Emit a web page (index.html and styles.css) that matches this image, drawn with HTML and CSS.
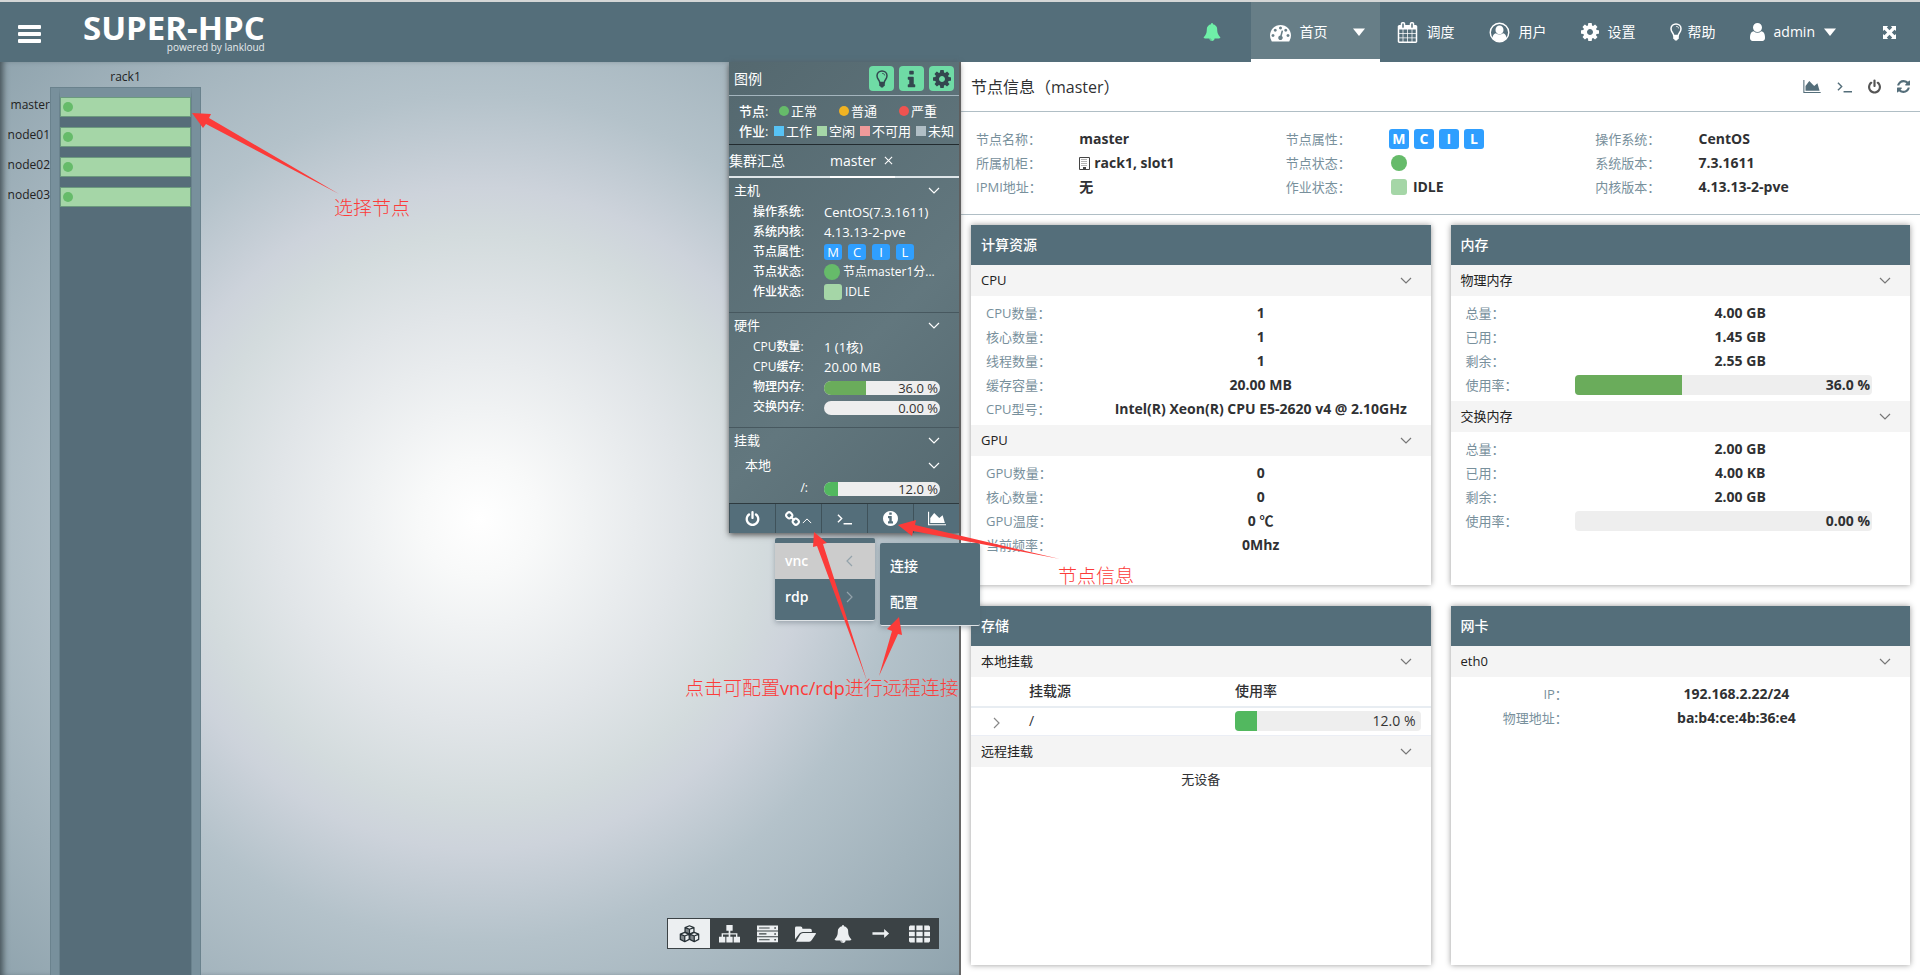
FILE: index.html
```html
<!DOCTYPE html>
<html lang="zh-CN">
<head>
<meta charset="utf-8">
<title>SUPER-HPC</title>
<link rel="stylesheet" href="styles.css">
</head>
<body>
<svg class="sprite" aria-hidden="true">
  <symbol id="i-bars" viewBox="0 0 23 18"><path d="M1 0h21a1 1 0 011 1v2a1 1 0 01-1 1H1a1 1 0 01-1-1V1a1 1 0 011-1zM1 7h21a1 1 0 011 1v2a1 1 0 01-1 1H1a1 1 0 01-1-1V8a1 1 0 011-1zM1 14h21a1 1 0 011 1v2a1 1 0 01-1 1H1a1 1 0 01-1-1v-2a1 1 0 011-1z"/></symbol>
  <symbol id="i-bell" viewBox="0 0 1792 1792"><path d="M912 1696q0-16-16-16-59 0-101.500-42.500t-42.500-101.500q0-16-16-16t-16 16q0 73 51.500 124.500t124.500 51.500q16 0 16-16zm816-288q0 52-38 90t-90 38h-448q0 106-75 181t-181 75-181-75-75-181h-448q-52 0-90-38t-38-90q50-42 91-88t85-119.500 74.500-158.500 50-206 19.500-260q0-152 117-282.500t307-158.500q-8-19-8-39 0-40 28-68t68-28 68 28 28 68q0 20-8 39 190 28 307 158.500t117 282.500q0 139 19.500 260t50 206 74.500 158.500 85 119.500 91 88z"/></symbol>
  <symbol id="i-tach" viewBox="0 0 1792 1792"><path d="M384 1152q0-53-37.500-90.500t-90.500-37.500-90.500 37.500-37.500 90.500 37.500 90.500 90.500 37.500 90.500-37.500 37.500-90.500zm192-448q0-53-37.500-90.500t-90.500-37.500-90.500 37.500-37.500 90.500 37.500 90.500 90.500 37.500 90.500-37.500 37.500-90.500zm428 481l101-382q6-26-7.500-48.500t-38.500-29.500-48 6.500-30 39.500l-101 382q-60 5-107 43.500t-63 98.500q-20 77 20 146t117 89 146-20 89-117q16-60-6-117t-72-91zm660-33q0-53-37.500-90.500t-90.500-37.500-90.500 37.500-37.500 90.500 37.500 90.500 90.500 37.500 90.500-37.500 37.500-90.500zm-640-640q0-53-37.500-90.500t-90.500-37.500-90.500 37.500-37.500 90.500 37.500 90.500 90.500 37.500 90.500-37.500 37.500-90.500zm448 192q0-53-37.500-90.500t-90.500-37.500-90.500 37.500-37.500 90.500 37.500 90.500 90.500 37.500 90.500-37.500 37.500-90.500zm320 448q0 261-141 483-19 29-54 29h-1402q-35 0-54-29-141-221-141-483 0-182 71-348t191-286 286-191 348-71 348 71 286 191 191 286 71 348z"/></symbol>
  <symbol id="i-cal" viewBox="0 0 1792 1792"><path d="M192 1664h288v-288h-288v288zm352 0h320v-288h-320v288zm-352-352h288v-320h-288v320zm352 0h320v-320h-320v320zm-352-384h288v-288h-288v288zm736 736h320v-288h-320v288zm-384-736h320v-288h-320v288zm768 736h288v-288h-288v288zm-384-352h320v-320h-320v320zm-352-864v-288q0-13-9.500-22.500t-22.500-9.500h-64q-13 0-22.500 9.500t-9.500 22.500v288q0 13 9.500 22.500t22.500 9.500h64q13 0 22.500-9.500t9.500-22.500zm736 864h288v-320h-288v320zm-384-384h320v-288h-320v288zm384 0h288v-288h-288v288zm32-480v-288q0-13-9.500-22.500t-22.500-9.500h-64q-13 0-22.500 9.500t-9.500 22.500v288q0 13 9.500 22.500t22.500 9.500h64q13 0 22.500-9.500t9.500-22.500zm384-64v1280q0 52-38 90t-90 38h-1408q-52 0-90-38t-38-90v-1280q0-52 38-90t90-38h128v-96q0-66 47-113t113-47h64q66 0 113 47t47 113v96h384v-96q0-66 47-113t113-47h64q66 0 113 47t47 113v96h128q52 0 90 38t38 90z"/></symbol>
  <symbol id="i-usercircle" viewBox="0 0 22 22"><circle cx="11" cy="11" r="9.700" fill="none" stroke="currentColor" stroke-width="1.500"/><ellipse cx="11" cy="8.300" rx="4.200" ry="4.600"/><path d="M3.600 17c.3-3.400 1.600-5 3.700-5.300 2.200 1.900 5.200 1.900 7.400 0 2.100.3 3.400 1.900 3.700 5.300-4 4.600-10.800 4.600-14.800 0z"/></symbol>
  <symbol id="i-cog" viewBox="128 128 1536 1536"><path d="M1152 896q0-106-75-181t-181-75-181 75-75 181 75 181 181 75 181-75 75-181zm512-109v222q0 12-8 23t-20 13l-185 28q-19 54-39 91 35 50 107 138 10 12 10 25t-9 23q-27 37-99 108t-94 71q-12 0-26-9l-138-108q-44 23-91 38-16 136-29 186-7 28-36 28h-222q-14 0-24.500-8.500t-11.500-21.500l-28-184q-49-16-90-37l-141 107q-10 9-25 9-14 0-25-11-126-114-165-168-7-10-7-23 0-12 8-23 15-21 51-66.500t54-70.500q-27-50-41-99l-183-27q-13-2-21-12.500t-8-23.500v-222q0-12 8-23t19-13l186-28q14-46 39-92-40-57-107-138-10-12-10-24 0-10 9-23 26-36 98.500-107.500t94.500-71.500q13 0 26 10l138 107q44-23 91-38 16-136 29-186 7-28 36-28h222q14 0 24.500 8.500t11.500 21.500l28 184q49 16 90 37l142-107q9-9 24-9 13 0 25 10 129 119 165 170 7 8 7 22 0 12-8 23-15 21-51 66.500t-54 70.500q26 50 41 98l183 28q13 2 21 12.500t8 23.500z"/></symbol>
  <symbol id="i-bulb" viewBox="0 0 12 18"><path d="M3.700 12.500C3.700 10 1 9.200 1 5.800 1 3 3.200.9 6 .9S11 3 11 5.800c0 3.400-2.700 4.200-2.700 6.700z" fill="none" stroke="currentColor" stroke-width="1.500"/><path d="M6.200 3.400c1.400 0 2.400.8 2.400 2" fill="none" stroke="currentColor" stroke-width=".9"/><path d="M3.200 12h5.600v3.800L7.600 16.600 7 17.600H5l-.6-1-1.200-.8z"/></symbol>
  <symbol id="i-user" viewBox="256 128 1280 1536"><path d="M1536 1399q0 109-62.500 187t-150.500 78h-854q-88 0-150.500-78t-62.500-187q0-85 8.500-160.500t31.500-152 58.500-131 94-89 134.500-34.500q131 128 313 128t313-128q76 0 134.500 34.500t94 89 58.500 131 31.500 152 8.500 160.500zm-256-887q0 159-112.500 271.500t-271.500 112.500-271.500-112.500-112.500-271.500 112.500-271.500 271.500-112.500 271.500 112.500 112.500 271.500z"/></symbol>
  <symbol id="i-caret" viewBox="0 0 12 8"><path d="M0 .5h12L6 8z"/></symbol>
  <symbol id="i-expand" viewBox="0 0 14 14"><path d="M0 0h5.500L4.100 1.500 7 4.500l2.900-3L8.500 0H14v5.500l-1.500-1.400-3 2.900 3 2.900L14 8.500V14H8.500l1.400-1.500L7 9.500l-2.900 3L5.500 14H0V8.500l1.500 1.400 3-2.900-3-2.900L0 5.500z"/></symbol>
  <symbol id="i-power" viewBox="128 0 1536 1664"><path d="M1664 896q0 156-61 298t-164 245-245 164-298 61-298-61-245-164-164-245-61-298q0-182 80.500-343t226.500-270q43-32 95.500-25t83.500 50q32 42 24.500 94.500t-49.500 84.500q-98 74-151.500 181t-53.500 228q0 104 40.500 198.500t109.500 163.500 163.500 109.500 198.500 40.500 198.500-40.500 163.500-109.500 109.500-163.500 40.500-198.500q0-121-53.500-228t-151.500-181q-42-32-49.500-84.500t24.500-94.500q31-43 84-50t95 25q146 109 226.500 270t80.500 343zm-640-768v640q0 52-38 90t-90 38-90-38-38-90v-640q0-52 38-90t90-38 90 38 38 90z"/></symbol>
  <symbol id="i-refresh" viewBox="128 128 1536 1536"><path d="M1639 1056q0 5-1 7-64 268-268 434.500t-478 166.500q-146 0-282.500-55t-243.500-157l-129 129q-19 19-45 19t-45-19-19-45v-448q0-26 19-45t45-19h448q26 0 45 19t19 45-19 45l-137 137q71 66 161 102t187 36q134 0 250-65t186-179q11-17 53-117 8-23 30-23h192q13 0 22.500 9.500t9.500 22.500zm25-800v448q0 26-19 45t-45 19h-448q-26 0-45-19t-19-45 19-45l138-138q-148-137-349-137-134 0-250 65t-186 179q-11 17-53 117-8 23-30 23h-199q-13 0-22.500-9.500t-9.500-22.500v-7q65-268 270-434.500t480-166.500q146 0 284 55.500t245 156.500l130-129q19-19 45-19t45 19 19 45z"/></symbol>
  <symbol id="i-area" viewBox="0 128 2048 1536"><path d="M2048 1536v128h-2048v-1536h128v1408h1920zm-384-1024l256 896h-1664v-576l448-576 576 576z"/></symbol>
  <symbol id="i-term" viewBox="0 0 16 12"><path d="M1 1.500l4 4-4 4M7 11h9" fill="none" stroke="currentColor" stroke-width="1.500"/></symbol>
  <symbol id="i-info" viewBox="512 128 768 1408"><path d="M1216 1344v128q0 26-19 45t-45 19h-512q-26 0-45-19t-19-45v-128q0-26 19-45t45-19h64v-384h-64q-26 0-45-19t-19-45v-128q0-26 19-45t45-19h384q26 0 45 19t19 45v576h64q26 0 45 19t19 45zm-128-1152v192q0 26-19 45t-45 19h-256q-26 0-45-19t-19-45v-192q0-26 19-45t45-19h256q26 0 45 19t19 45z"/></symbol>
  <symbol id="i-infoc" viewBox="128 128 1536 1536"><path d="M1152 1376v-160q0-14-9-23t-23-9h-96v-512q0-14-9-23t-23-9h-320q-14 0-23 9t-9 23v160q0 14 9 23t23 9h96v320h-96q-14 0-23 9t-9 23v160q0 14 9 23t23 9h448q14 0 23-9t9-23zm-128-896v-160q0-14-9-23t-23-9h-192q-14 0-23 9t-9 23v160q0 14 9 23t23 9h192q14 0 23-9t9-23zm640 416q0 209-103 385.500t-279.500 279.500-385.500 103-385.500-103-279.500-279.500-103-385.500 103-385.500 279.500-279.500 385.500-103 385.500 103 279.500 279.500 103 385.500z"/></symbol>
  <symbol id="i-link" viewBox="0 0 16 16"><g fill="none" stroke="currentColor" stroke-width="2.200"><rect x="1.400" y="1.600" width="6.200" height="6" rx="2.600" transform="rotate(45 4.500 4.600)"/><rect x="8.400" y="8.400" width="6.200" height="6" rx="2.600" transform="rotate(45 11.500 11.400)"/><path d="M5.800 5.900l4.400 4.200"/></g></symbol>
  <symbol id="i-down" viewBox="0 0 12 7"><path d="M1 1l5 5 5-5" fill="none" stroke="currentColor" stroke-width="1.200"/></symbol>
  <symbol id="i-up" viewBox="0 0 12 7"><path d="M1 6l5-5 5 5" fill="none" stroke="currentColor" stroke-width="1.200"/></symbol>
  <symbol id="i-left" viewBox="0 0 7 12"><path d="M6 1L1 6l5 5" fill="none" stroke="currentColor" stroke-width="1.200"/></symbol>
  <symbol id="i-right" viewBox="0 0 7 12"><path d="M1 1l5 5-5 5" fill="none" stroke="currentColor" stroke-width="1.200"/></symbol>
  <symbol id="i-close" viewBox="0 0 10 10"><path d="M1 1l8 8M9 1L1 9" fill="none" stroke="currentColor" stroke-width="1.200"/></symbol>
  <symbol id="i-rack" viewBox="0 0 11 13"><path d="M.5.500h10v12H.5z" fill="#fff" stroke="#444"/><path d="M2.500 2.500h6M2.500 4.500h6M2.500 6.500h6M2.500 8.500h6" stroke="#666" stroke-dasharray="1 1" fill="none"/><path d="M4 10h3v2.500H4z" fill="#444"/></symbol>
  <symbol id="i-cubes" viewBox="0 0 22 19"><g fill="#eceff1" stroke="#263035" stroke-width="1.300" stroke-linejoin="round"><path d="M6 7.800l4.700 1.900v5.500L6 17.600l-4.700-2.400V9.700zM1.300 9.700L6 11.600l4.700-1.900M6 11.600v6"/><path d="M16 7.800l4.700 1.900v5.500L16 17.600l-4.700-2.400V9.700zM11.300 9.700l4.700 1.900 4.700-1.900M16 11.600v6"/><path d="M11 .8l4.700 1.900v4.800L11 9.500 6.300 7.500V2.700zM6.300 2.700L11 4.500l4.700-1.800M11 4.500v5"/></g><path d="M6 11.600v6l-4.700-2.400V9.700zM16 11.600v6l-4.700-2.400V9.700zM11 4.500v5L6.300 7.500V2.700z" fill="#263035" opacity=".55"/></symbol>
  <symbol id="i-site" viewBox="0 0 20 17"><path d="M7 0h6v5.500h-2.200v2.200h6.700V11H20v5.500h-6V11h2.200V9h-5.400v2H13v5.500H7V11h2.200V9H3.800v2H6v5.500H0V11h2.500V7.700h6.700V5.500H7z"/></symbol>
  <symbol id="i-server" viewBox="0 0 20 16"><path fill-rule="evenodd" d="M0 0h20v4.600H0zM2 1.800v1h10v-1zM16.500 1.500v1.500h1.500V1.500zM0 5.600h20v4.600H0zM2 7.400v1h7v-1zM16.500 7.200v1.500h1.500V7.200zM0 11.200h20v4.600H0zM2 13v1h10v-1zM16.500 12.800v1.500h1.500v-1.500z"/></symbol>
  <symbol id="i-folder" viewBox="0 0 20 15"><path d="M0 12.500V1.700Q0 .3 1.400.3h4Q7 .3 7 1.800V2.500h7.500q1.500 0 1.500 1.500v1.500H7.500Q5.500 5.500 4.200 7z"/><path d="M1 14.800L5 8q.9-1.500 2.600-1.500H19.500q.8.200.3 1L16 13.300q-.9 1.500-2.500 1.500z"/></symbol>
  <symbol id="i-arrow" viewBox="0 0 19 10"><path d="M0 3.600h13V0l5.500 5L13 10V6.400H0z"/></symbol>
  <symbol id="i-th" viewBox="0 0 20 16"><path d="M1 0h4.500v4.500H0V1zM7 0h6v4.500H7zM14.500 0H19l1 1v3.500h-5.500zM0 5.800h5.500v4.400H0zM7 5.800h6v4.400H7zM14.500 5.800H20v4.400h-5.500zM0 11.500h5.500V16H1l-1-1zM7 11.500h6V16H7zM14.500 11.500H20V15l-1 1h-4.500z"/></symbol>
</svg>

<header class="top">
  <button class="menu-btn" aria-label="菜单"><svg class="w23 h18"><use href="#i-bars"/></svg></button>
  <div class="logo"><strong>SUPER-HPC</strong><small>powered by lankloud</small></div>
  <nav class="nav">
    <a href="#" class="bell" aria-label="通知"><svg class="w18 h18"><use href="#i-bell"/></svg></a>
    <a href="#" class="on"><svg class="w21 h21"><use href="#i-tach"/></svg>首页<svg class="caret push"><use href="#i-caret"/></svg></a>
    <a href="#"><svg class="w21 h21"><use href="#i-cal"/></svg>调度</a>
    <a href="#"><svg class="w21 h21"><use href="#i-usercircle"/></svg>用户</a>
    <a href="#"><svg class="w18 h18"><use href="#i-cog"/></svg>设置</a>
    <a href="#" class="tight"><svg class="w12 h18"><use href="#i-bulb"/></svg>帮助</a>
    <a href="#"><svg class="w15 h18"><use href="#i-user"/></svg>admin<svg class="caret"><use href="#i-caret"/></svg></a>
    <a href="#" class="full" aria-label="全屏"><svg class="w13 h13"><use href="#i-expand"/></svg></a>
  </nav>
</header>

<main class="main">
  <section class="canvas">
    <div class="rack-area">
      <ul class="rack-labels"><li>master</li><li>node01</li><li>node02</li><li>node03</li></ul>
      <div class="rack-col">
        <div class="rack-name">rack1</div>
        <div class="rack"><div class="rack-in">
          <div class="slot"></div><div class="slot"></div><div class="slot"></div><div class="slot"></div>
        </div></div>
      </div>
    </div>

    <aside class="panel">
      <div class="p-title"><span>图例</span>
        <button aria-label="提示"><svg class="w12 h18"><use href="#i-bulb"/></svg></button>
        <button aria-label="信息"><svg class="w9 h18"><use href="#i-info"/></svg></button>
        <button aria-label="设置"><svg class="w18 h18"><use href="#i-cog"/></svg></button>
      </div>
      <div class="legend">
        <div class="lg nodes"><b>节点:</b><span><i class="dot g"></i>正常</span><span><i class="dot y"></i>普通</span><span><i class="dot r"></i>严重</span></div>
        <div class="lg jobs"><b>作业:</b><span><i class="sq b"></i>工作</span><span><i class="sq lg1"></i>空闲</span><span><i class="sq p"></i>不可用</span><span><i class="sq gr"></i>未知</span></div>
      </div>
      <div class="tabs"><a href="#">集群汇总</a><a href="#" class="cur">master<svg class="w9 h9"><use href="#i-close"/></svg></a></div>
      <div class="p-sec">
        <h3>主机<svg class="chev"><use href="#i-down"/></svg></h3>
        <dl>
          <dt>操作系统:</dt><dd>CentOS(7.3.1611)</dd>
          <dt>系统内核:</dt><dd>4.13.13-2-pve</dd>
          <dt>节点属性:</dt><dd class="tags"><i>M</i><i>C</i><i>I</i><i>L</i></dd>
          <dt>节点状态:</dt><dd class="st"><i class="dot g big"></i>节点master1分...</dd>
          <dt>作业状态:</dt><dd class="st"><i class="sq lg1 big"></i>IDLE</dd>
        </dl>
      </div>
      <div class="p-sec">
        <h3>硬件<svg class="chev"><use href="#i-down"/></svg></h3>
        <dl>
          <dt>CPU数量:</dt><dd>1 (1核)</dd>
          <dt>CPU缓存:</dt><dd>20.00 MB</dd>
          <dt>物理内存:</dt><dd><div class="bar"><span class="fill olive" style="width:36%"></span><em>36.0 %</em></div></dd>
          <dt>交换内存:</dt><dd><div class="bar"><em>0.00 %</em></div></dd>
        </dl>
      </div>
      <div class="p-sec last">
        <h3>挂载<svg class="chev"><use href="#i-down"/></svg></h3>
        <h4>本地<svg class="chev"><use href="#i-down"/></svg></h4>
        <dl><dt class="end">/:</dt><dd><div class="bar"><span class="fill green" style="width:12%"></span><em>12.0 %</em></div></dd></dl>
      </div>
      <div class="p-tools">
        <button aria-label="电源"><svg class="w15 h15"><use href="#i-power"/></svg></button>
        <button aria-label="远程连接"><svg class="w15 h15"><use href="#i-link"/></svg><svg class="up"><use href="#i-up"/></svg></button>
        <button aria-label="终端"><svg class="w15 h12"><use href="#i-term"/></svg></button>
        <button aria-label="节点信息"><svg class="w15 h15"><use href="#i-infoc"/></svg></button>
        <button aria-label="图表"><svg class="w18 h15"><use href="#i-area"/></svg></button>
      </div>
    </aside>

    <div class="menu remote">
      <a href="#" class="hl">vnc<svg class="w7 h12"><use href="#i-left"/></svg></a>
      <a href="#">rdp<svg class="w7 h12"><use href="#i-right"/></svg></a>
    </div>
    <div class="menu sub"><a href="#">连接</a><a href="#">配置</a></div>

    <div class="dock">
      <button class="act" aria-label="机柜"><svg class="w23 h18"><use href="#i-cubes"/></svg></button>
      <button aria-label="拓扑"><svg class="w21 h18"><use href="#i-site"/></svg></button>
      <button aria-label="服务器"><svg class="w21 h18"><use href="#i-server"/></svg></button>
      <button aria-label="文件"><svg class="w21 h18"><use href="#i-folder"/></svg></button>
      <button aria-label="告警"><svg class="w18 h18"><use href="#i-bell"/></svg></button>
      <button aria-label="前往"><svg class="w18 h9"><use href="#i-arrow"/></svg></button>
      <button aria-label="网格"><svg class="w21 h18"><use href="#i-th"/></svg></button>
    </div>
  </section>

  <section class="detail">
    <div class="d-title"><h1>节点信息（master）</h1>
      <div class="d-tools">
        <button aria-label="图表"><svg class="w18 h13"><use href="#i-area"/></svg></button>
        <button aria-label="终端"><svg class="w15 h12"><use href="#i-term"/></svg></button>
        <button aria-label="电源" class="dark"><svg class="w13 h15"><use href="#i-power"/></svg></button>
        <button aria-label="刷新"><svg class="w13 h13"><use href="#i-refresh"/></svg></button>
      </div>
    </div>
    <div class="info">
      <dl><dt>节点名称：</dt><dd>master</dd><dt>所属机柜：</dt><dd><svg class="rk"><use href="#i-rack"/></svg>rack1, slot1</dd><dt>IPMI地址：</dt><dd>无</dd></dl>
      <dl><dt>节点属性：</dt><dd class="tags"><i>M</i><i>C</i><i>I</i><i>L</i></dd><dt>节点状态：</dt><dd class="st"><i class="dot g big"></i></dd><dt>作业状态：</dt><dd class="st"><i class="sq lg1 big"></i>IDLE</dd></dl>
      <dl><dt>操作系统：</dt><dd>CentOS</dd><dt>系统版本：</dt><dd>7.3.1611</dd><dt>内核版本：</dt><dd>4.13.13-2-pve</dd></dl>
    </div>
    <div class="cards">
      <article class="card">
        <h2>计算资源</h2>
        <h3>CPU<svg class="chev"><use href="#i-down"/></svg></h3>
        <dl><dt>CPU数量：</dt><dd>1</dd><dt>核心数量：</dt><dd>1</dd><dt>线程数量：</dt><dd>1</dd><dt>缓存容量：</dt><dd>20.00 MB</dd><dt>CPU型号：</dt><dd>Intel(R) Xeon(R) CPU E5-2620 v4 @ 2.10GHz</dd></dl>
        <h3>GPU<svg class="chev"><use href="#i-down"/></svg></h3>
        <dl><dt>GPU数量：</dt><dd>0</dd><dt>核心数量：</dt><dd>0</dd><dt>GPU温度：</dt><dd>0 ℃</dd><dt>当前频率：</dt><dd>0Mhz</dd></dl>
      </article>
      <article class="card">
        <h2>内存</h2>
        <h3>物理内存<svg class="chev"><use href="#i-down"/></svg></h3>
        <dl><dt>总量：</dt><dd>4.00 GB</dd><dt>已用：</dt><dd>1.45 GB</dd><dt>剩余：</dt><dd>2.55 GB</dd><dt>使用率：</dt><dd><div class="bar wide"><span class="fill olive" style="width:36%"></span><em>36.0 %</em></div></dd></dl>
        <h3>交换内存<svg class="chev"><use href="#i-down"/></svg></h3>
        <dl><dt>总量：</dt><dd>2.00 GB</dd><dt>已用：</dt><dd>4.00 KB</dd><dt>剩余：</dt><dd>2.00 GB</dd><dt>使用率：</dt><dd><div class="bar wide"><em>0.00 %</em></div></dd></dl>
      </article>
      <article class="card">
        <h2>存储</h2>
        <h3>本地挂载<svg class="chev"><use href="#i-down"/></svg></h3>
        <table>
          <thead><tr><th class="c1"></th><th class="c2">挂载源</th><th>使用率</th></tr></thead>
          <tbody><tr><td class="c1"><svg class="w7 h12"><use href="#i-right"/></svg></td><td>/</td><td><div class="bar"><span class="fill green" style="width:12%"></span><em>12.0 %</em></div></td></tr></tbody>
        </table>
        <h3>远程挂载<svg class="chev"><use href="#i-down"/></svg></h3>
        <p class="none">无设备</p>
      </article>
      <article class="card net">
        <h2>网卡</h2>
        <h3>eth0<svg class="chev"><use href="#i-down"/></svg></h3>
        <dl><dt>IP：</dt><dd>192.168.2.22/24</dd><dt>物理地址：</dt><dd>ba:b4:ce:4b:36:e4</dd></dl>
      </article>
    </div>
  </section>
</main>

<svg class="notes" width="1200" height="720" viewBox="0 0 1200 720">
  <path d="M192 113l19 1-2 4 130 76-133-70-3 4zM898 525l18-5-1 5 145 34-147-28-1 5zM814 532l13 11-4 1 44 137-50-135-4 1zM899 617l3 18-4-1-19 42 13-45-5-2z"/>
  <text x="334" y="215">选择节点</text>
  <text x="1058" y="583">节点信息</text>
  <text x="685" y="695">点击可配置<tspan class="lat">vnc/rdp</tspan>进行远程连接</text>
</svg>
</body>
</html>
```
FILE: styles.css
```css
* { box-sizing: border-box; }
html, body { height: 100%; }
body {
  margin: 0;
  display: flex;
  flex-direction: column;
  font: 14px/20px "Open Sans", "Noto Sans CJK SC", sans-serif;
  color: #303133;
  background: #fff;
  overflow: hidden;
  position: relative;
}
.sprite { position: absolute; width: 0; height: 0; }
svg { fill: currentColor; flex: none; display: block; }
button { font: inherit; color: inherit; border: 0; background: none; padding: 0; display: flex; align-items: center; justify-content: center; cursor: pointer; }
a { color: inherit; text-decoration: none; }
h1, h2, h3, h4, dl, dd, ul, p { margin: 0; padding: 0; font-weight: normal; font-size: inherit; }
ul { list-style: none; }
i, em { font-style: normal; }
.w7 { width: 7px; } .w9 { width: 9px; } .w12 { width: 12px; } .w13 { width: 13px; } .w15 { width: 15px; } .w18 { width: 18px; } .w21 { width: 21px; } .w23 { width: 23px; }
.h9 { height: 9px; } .h12 { height: 12px; } .h13 { height: 13px; } .h15 { height: 15px; } .h18 { height: 18px; } .h21 { height: 21px; }

/* header */
.top { flex: none; height: 62px; border-top: 2px solid #d4d6d6; background: #546e7a; color: #fff; display: flex; align-items: stretch; }
.menu-btn { padding: 4px 0 0 18px; }
.logo { margin-left: 42px; display: flex; flex-direction: column; align-items: flex-end; padding-top: 11px; }
.logo strong { font-size: 33px; line-height: 29px; }
.logo small { font-size: 10px; line-height: 10px; color: #e6ebed; }
.nav { margin-left: auto; display: flex; }
.nav a { display: flex; align-items: center; gap: 9px; padding: 0 17px; }
.nav .bell { color: #6ff0a8; padding: 0 30px; }
.nav .on { background: #677e87; border-bottom: 3px solid #fff; padding: 3px 15px 0 19px; }
.nav .tight { gap: 6px; }
.nav .full { padding: 0 24px 0 30px; }
.caret { width: 12px; height: 8px; }
.push { margin-left: 16px; }

.main { flex: 1; min-height: 0; display: grid; grid-template-columns: calc(50% + 1px) 1fr; }

/* rack canvas */
.canvas {
  position: relative;
  border-right: 2px solid #666;
  background: radial-gradient(circle at 50% 50%, #fff 0%, #f8f9f9 9%, #e1e5e8 31%, #d3dbdd 43%, #cdd3db 50%, #b4c2ca 64%, #90a4ae 100%);
  box-shadow: inset 6px 0 6px -3px #455258;
}
.rack-area { display: flex; height: 100%; color: #222; font-size: 12px; }
.rack-labels { width: 50px; padding-top: 33px; text-align: right; }
.rack-labels li { height: 20px; margin-bottom: 10px; white-space: nowrap; }
.rack-col { width: 151px; display: flex; flex-direction: column; }
.rack-name { height: 25px; padding-top: 5px; text-align: center; }
.rack { flex: 1; background: #78909c; border: 1px solid #6a828d; border-bottom: 0; padding: 0 8px; }
.rack-in { height: 100%; background: #566d79; border: 1px solid #6a828d; border-top: 9px solid #78909c; border-bottom: 0; display: flex; flex-direction: column; gap: 10px; }
.slot { height: 20px; background: #a5d6a7; border: 1px solid #6b9a7e; padding: 4px 2px; }
.slot::before { content: ""; display: block; width: 10px; height: 10px; border-radius: 5px; background: #66bb6a; }

/* side panel */
.panel { position: absolute; top: 0; right: 0; width: 230px; color: #fff; background: linear-gradient(135deg, #54686f, #62777e 60%, #54686f); box-shadow: 0 2px 6px #555; font-size: 13px; }
.p-title { height: 34px; border-bottom: 1px solid #a4b5be; display: flex; align-items: center; gap: 5px; padding: 0 5px; font-size: 14px; }
.p-title span { margin-right: auto; }
.p-title button { width: 25px; height: 25px; border-radius: 4px; background: #6fdba5; color: #33474f; }
.legend { height: 49px; padding: 5px 0 4px 10px; border-bottom: 1px solid #222b2f; font-size: 13px; }
.lg { display: flex; align-items: center; height: 20px; white-space: nowrap; }
.lg b { font-weight: 500; width: 39px; }
.lg span { display: flex; align-items: center; gap: 2px; }
.nodes span { width: 60px; padding-left: 1px; }
.jobs span { margin-right: 5px; }
.dot { width: 10px; height: 10px; border-radius: 50%; flex: none; }
.sq { width: 10px; height: 10px; flex: none; }
.g { background: #66bb6a; } .y { background: #f0b323; } .r { background: #ef5350; }
.b { background: #57c3f5; } .lg1 { background: #a5d6a7; } .p { background: #ef9a9a; } .gr { background: #b0bec5; }
.big { width: 16px; height: 16px; }
.sq.big { border-radius: 3px; }
.tabs { height: 33px; border-bottom: 2px solid #dfe6e9; display: flex; gap: 45px; font-size: 14px; line-height: 31px; }
.tabs a:first-child { white-space: nowrap; }
.tabs .cur { display: flex; align-items: center; gap: 8px; height: 33px; border-bottom: 2px solid #fff; padding-right: 2px; }
.p-sec { border-bottom: 1px solid #47585f; padding-bottom: 10px; }
.p-sec h3, .p-sec h4 { height: 24px; line-height: 22px; padding: 0 19px 0 5px; display: flex; align-items: center; justify-content: space-between; }
.p-sec h4 { padding-left: 16px; height: 26px; }
.p-sec dl { display: grid; grid-template-columns: 71px 116px; column-gap: 24px; grid-auto-rows: 20px; }
.p-sec dt { font-size: 12px; font-weight: 500; padding-left: 24px; white-space: nowrap; }
.p-sec dt.end { text-align: right; padding-right: 0; margin-right: -8px; }
.p-sec dd { white-space: nowrap; color: #fff; font-size: 13px; }
.p-sec dd.st { font-size: 12px; }
.last { padding-bottom: 5px; border-bottom-color: #2e3a3f; }
.chev { width: 12px; height: 7px; }
.tags { display: flex; align-items: center; gap: 6px; }
.tags i { width: 18px; height: 16px; line-height: 16px; border-radius: 3px; background: #2f9fff; color: #fff; text-align: center; font-size: 13px; }
.st { display: flex; align-items: center; gap: 3px; }
.p-sec .sq.big { width: 18px; }
.bar { position: relative; height: 14px; border-radius: 7px; background: #eee; color: #333; }
.p-sec .bar { margin-top: 4px; }
.fill { display: block; height: 100%; border-radius: 7px 0 0 7px; }
.card .fill { border-radius: 4px 0 0 4px; }
.olive { background: #6aac5b; } .green { background: #52b85f; }
.bar em { position: absolute; right: 2px; top: 0; bottom: 0; display: flex; align-items: center; }
.p-tools { display: grid; grid-template-columns: repeat(5, 1fr); height: 29px; background: #546e7a; }
.p-tools button { border-left: 1px solid #3f525a; }
.up { width: 10px; height: 6px; margin-left: 2px; margin-top: 4px; }

/* drop-down menus */
.menu { position: absolute; width: 100px; background: #546e7a; color: #fff; border-radius: 2px; border-bottom: 1px solid #dfe3e6; box-shadow: 0 2px 5px rgba(80, 95, 105, .4); padding: 5px 0; font-weight: 600; z-index: 3; }
.menu a { display: flex; justify-content: space-between; align-items: center; height: 36px; padding: 0 22px 0 10px; }
.menu svg { color: #94a3ab; }
.menu .hl { background: #ccc; }
.remote { top: 476px; right: 84px; }
.sub { top: 481px; right: -21px; font-weight: 500; }

.dock { position: absolute; right: 20px; bottom: 26px; display: flex; background: #3b4245; border: 1px solid #3b4245; color: #eceff1; }
.dock button { width: 38px; height: 29px; }
.dock .act { width: 42px; background: #eceff1; }

/* detail */
.detail { min-width: 0; display: flex; flex-direction: column; }
.d-title { flex: none; height: 50px; border-bottom: 1px solid #b0bec5; display: flex; align-items: center; justify-content: space-between; padding: 0 10px; }
.d-title h1 { font-size: 16px; }
.d-tools { display: flex; align-items: center; gap: 16px; color: #546e7a; }
.dark { color: #555; }
.info { flex: none; display: grid; grid-template-columns: repeat(3, 1fr); padding: 15px; border-bottom: 1px solid #b0bec5; }
.info dl { display: grid; grid-template-columns: 1fr 2fr; grid-auto-rows: 24px; line-height: 24px; }
.info dt, .card dt { color: #78909c; font-size: 13px; white-space: nowrap; }
.info dd, .card dd { font-weight: bold; font-size: 14px; white-space: nowrap; }
.info dd { display: flex; align-items: center; }
.info .tags { gap: 5px; }
.info .tags i { width: 20px; height: 20px; line-height: 20px; font-size: 14px; }
.info .st { gap: 6px; padding-left: 2px; }
.rk { width: 11px; height: 13px; margin-right: 4px; }
.cards { flex: 1; min-height: 0; display: grid; grid-template-columns: 1fr 1fr; grid-template-rows: 1fr 1fr; gap: 21px 20px; padding: 10px; }
.card { background: #fff; box-shadow: 0 0 6px rgba(0, 0, 0, .4); min-width: 0; min-height: 0; }
.card h2 { height: 40px; line-height: 40px; padding-left: 10px; background: #546e7a; color: #fff; font-weight: 500; }
.card h3 { height: 31px; line-height: 31px; padding: 0 19px 0 10px; background: #f4f4f4; color: #222; font-size: 13px; display: flex; align-items: center; justify-content: space-between; }
.card h3 svg { color: #777; }
.card dl { display: grid; grid-template-columns: 1fr 3fr; grid-auto-rows: 24px; line-height: 24px; padding: 5px 5px 4px 15px; }
.card dd { text-align: center; }
.bar.wide { width: 90%; height: 20px; margin-top: 2px; border-radius: 4px; }
.wide em { color: #303133; }
.card table { width: 100%; border-collapse: collapse; table-layout: fixed; }
.card th { text-align: left; font-weight: 500; padding: 4px 0 5px; line-height: 20px; border-bottom: 2px solid #e8edf2; }
.card td { padding: 3px 0; height: 29px; border-bottom: 1px solid #ebeef5; vertical-align: top; }
.card td:last-child { padding-right: 10px; }
.card td .bar { height: 20px; border-radius: 4px; }
.card td em { right: 5px; }
.card .c1 { width: 58px; }
td.c1 svg { margin: 6px 0 0 22px; color: #888; }
.card .c2 { width: 206px; }
.none { text-align: center; font-size: 13px; line-height: 24px; }
.net dt { text-align: right; }
.net dl { padding-left: 5px; }

.notes { position: absolute; left: 0; top: 0; z-index: 5; pointer-events: none; fill: #fc3b39; font-family: "Noto Sans CJK SC", sans-serif; font-weight: 300; font-size: 19px; }
.lat { font-family: "Open Sans", sans-serif; font-weight: 400; font-size: 18px; }
```
